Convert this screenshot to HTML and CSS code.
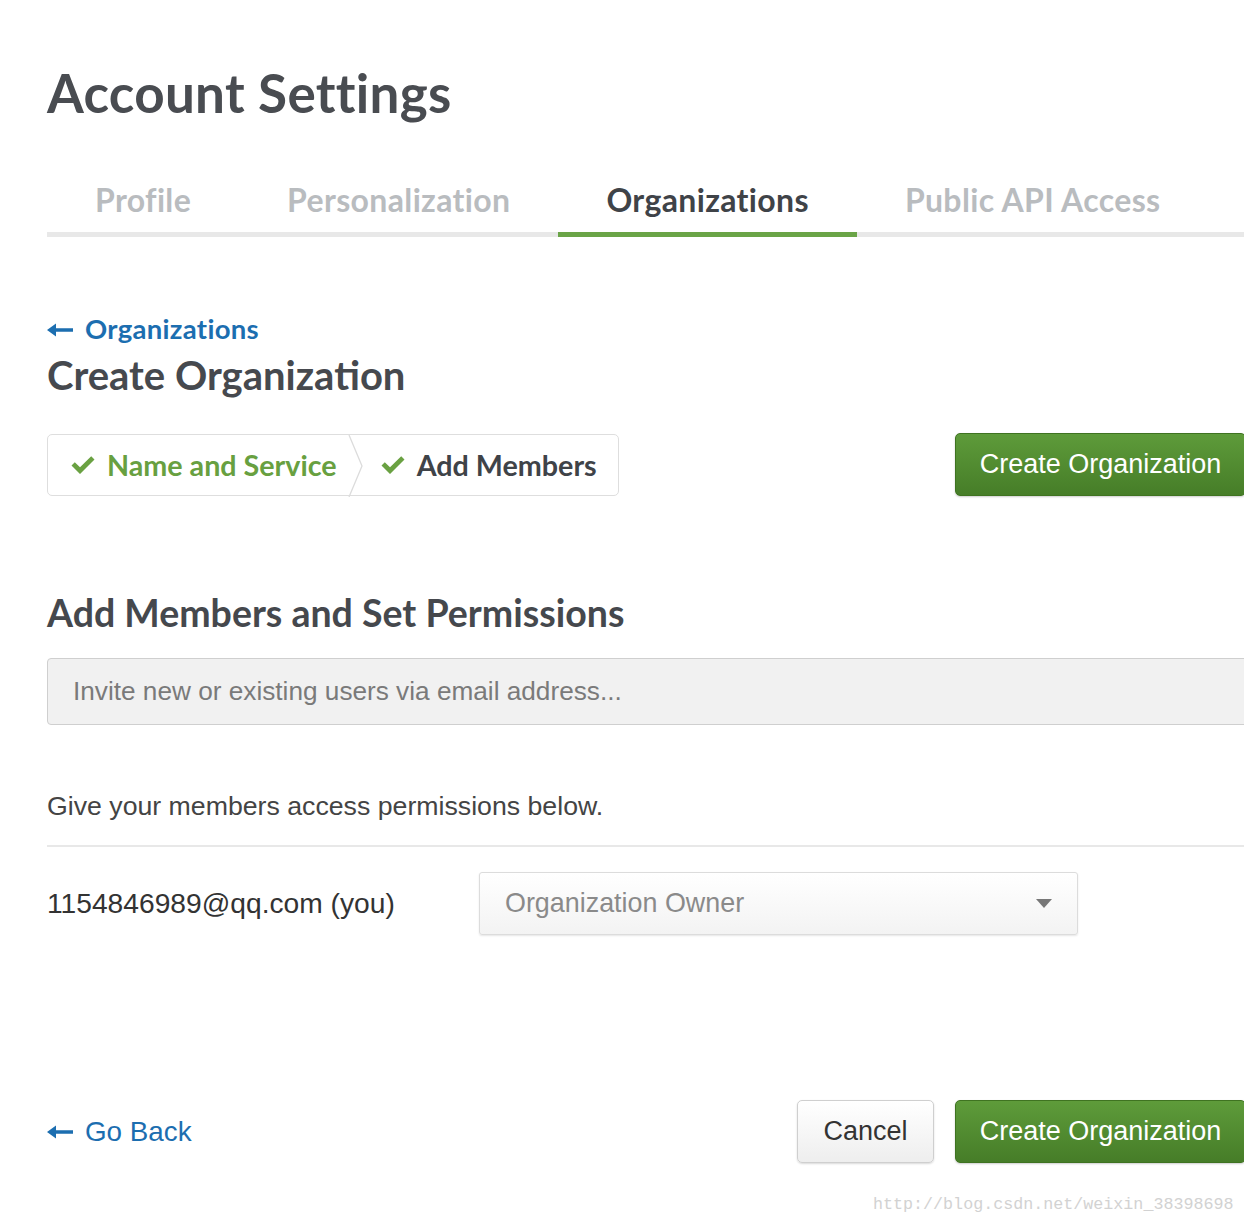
FILE: index.html
```html
<!DOCTYPE html>
<html>
<head>
<meta charset="utf-8">
<title>Account Settings</title>
<link rel="stylesheet" href="styles.css">
</head>
<body>
<div class="page">
  <h1 class="title">Account Settings</h1>
  <nav class="tabs">
    <a class="tab">Profile</a>
    <a class="tab">Personalization</a>
    <a class="tab active">Organizations</a>
    <a class="tab">Public API Access</a>
  </nav>

  <a class="back-link">
    <svg class="arrow" width="26" height="14" viewBox="0 0 26 14"><path d="M0 7 L9 0.5 L9 5.3 L26 5.3 L26 8.7 L9 8.7 L9 13.5 Z" fill="currentColor"/></svg>
    <span>Organizations</span>
  </a>
  <h2 class="subtitle">Create Organization</h2>

  <div class="steps-row">
    <div class="steps">
      <div class="step done">
        <svg class="check" width="24" height="19" viewBox="0 0 24 19"><path d="M0.5 10.5 L3.8 7.2 L9 12.3 L20.2 1.2 L23.5 4.5 L9 19 Z" fill="#6aa142"/></svg>
        <span>Name and Service</span>
      </div>
      <svg class="chevron" width="16" height="62" viewBox="0 0 16 62"><polyline points="1,0 14,31 1,62" fill="none" stroke="#dcdcdc" stroke-width="1.3"/></svg>
      <div class="step current">
        <svg class="check" width="24" height="19" viewBox="0 0 24 19"><path d="M0.5 10.5 L3.8 7.2 L9 12.3 L20.2 1.2 L23.5 4.5 L9 19 Z" fill="#6aa142"/></svg>
        <span>Add Members</span>
      </div>
    </div>
    <button class="btn btn-primary">Create Organization</button>
  </div>

  <h3 class="section-title">Add Members and Set Permissions</h3>
  <div class="invite">Invite new or existing users via email address...</div>

  <p class="hint">Give your members access permissions below.</p>
  <div class="member-row">
    <span class="member">1154846989@qq.com (you)</span>
    <div class="select">
      <span>Organization Owner</span>
      <svg width="16" height="9" viewBox="0 0 16 9"><path d="M0 0 L16 0 L8 9 Z" fill="#777"/></svg>
    </div>
  </div>

  <div class="footer">
    <a class="go-back">
      <svg class="arrow" width="26" height="14" viewBox="0 0 26 14"><path d="M0 7 L9 0.5 L9 5.3 L26 5.3 L26 8.7 L9 8.7 L9 13.5 Z" fill="currentColor"/></svg>
      <span>Go Back</span>
    </a>
    <div class="actions">
      <button class="btn btn-default">Cancel</button>
      <button class="btn btn-primary">Create Organization</button>
    </div>
  </div>
  <div class="watermark">http://blog.csdn.net/weixin_38398698</div>
</div>
</body>
</html>
```

FILE: styles.css
```css
html, body {
  margin: 0;
  padding: 0;
  overflow: hidden;
  background: #fff;
}
.page {
  width: 1199px;
  padding: 0 0 0 47px;
  font-family: "Lato", "Open Sans", sans-serif;
  color: #464a4f;
}
.title {
  margin: 0;
  padding-top: 61px;
  font-size: 53px;
  line-height: 64px;
  font-weight: 700;
  color: #494c51;
  letter-spacing: 0.3px;
}
.tabs {
  display: flex;
  margin-top: 51px;
  border-bottom: 5px solid #e8e8e8;
}
.tab {
  padding: 0 48px 8px;
  font-size: 32px;
  line-height: 48px;
  font-weight: 700;
  color: #b9bcbf;
  letter-spacing: 0.35px;
  margin-bottom: -5px;
  border-bottom: 5px solid transparent;
}
.tab.active {
  color: #3f4348;
  border-bottom-color: #6aa447;
}
.back-link {
  display: flex;
  align-items: center;
  gap: 12px;
  margin-top: 75px;
  color: #1c6eb0;
  font-size: 27.5px;
  font-weight: 700;
  line-height: 34px;
  letter-spacing: 0.3px;
}
.back-link .arrow { margin-top: 1px; }
.subtitle {
  margin: 6px 0 0;
  font-size: 40px;
  line-height: 46px;
  font-weight: 700;
  color: #46494e;
}
.steps-row {
  display: flex;
  justify-content: space-between;
  align-items: center;
  margin-top: 35px;
}
.steps {
  display: flex;
  align-items: stretch;
  height: 62px;
  border: 1px solid #dedede;
  border-radius: 5px;
  box-sizing: border-box;
}
.step {
  display: flex;
  align-items: center;
  gap: 12px;
  font-size: 28.7px;
  font-weight: 700;
}
.step.done {
  padding: 0 11px 0 23px;
  color: #68a040;
}
.step.current {
  padding: 0 21px 0 17px;
  color: #3f4348;
}
.chevron { display: block; }
.btn {
  font-family: "Liberation Sans", Arial, sans-serif;
  font-size: 27px;
  height: 63px;
  border-radius: 5px;
  cursor: pointer;
  box-sizing: border-box;
}
.btn-primary {
  width: 291px;
  color: #fff;
  border: 1px solid #3f7321;
  background: linear-gradient(#5e9b3a, #467d28);
  box-shadow: 0 1px 2px rgba(0,0,0,0.2);
}
.btn-default {
  width: 137px;
  color: #333;
  border: 1px solid #cfcfcf;
  background: linear-gradient(#ffffff, #eeeeee);
  box-shadow: 0 1px 2px rgba(0,0,0,0.15);
}
.section-title {
  margin: 96px 0 0;
  font-size: 37.5px;
  line-height: 42px;
  font-weight: 700;
  color: #45484d;
}
.invite {
  margin-top: 24px;
  height: 67px;
  box-sizing: border-box;
  border: 1px solid #cfcfcf;
  border-radius: 4px;
  background: #f1f1f1;
  padding: 0 25px;
  display: flex;
  align-items: center;
  font-family: "Liberation Sans", Arial, sans-serif;
  font-size: 26.2px;
  color: #7a7a7a;
  width: 1220px;
}
.hint {
  margin: 66px 0 0;
  font-family: "Liberation Sans", Arial, sans-serif;
  font-size: 26.7px;
  line-height: 30px;
  color: #444;
  padding-bottom: 24px;
  border-bottom: 2px solid #e8e8e8;
}
.member-row {
  display: flex;
  align-items: center;
  margin-top: 25px;
}
.member {
  width: 432px;
  font-family: "Liberation Sans", Arial, sans-serif;
  font-size: 28.2px;
  color: #333;
}
.select {
  width: 599px;
  height: 63px;
  box-sizing: border-box;
  border: 1px solid #dcdcdc;
  border-radius: 3px;
  background: linear-gradient(#ffffff, #f3f3f3);
  box-shadow: 0 1px 2px rgba(0,0,0,0.1);
  display: flex;
  align-items: center;
  justify-content: space-between;
  padding: 0 25px 0 25px;
  font-family: "Liberation Sans", Arial, sans-serif;
  font-size: 26.9px;
  color: #8a8a8a;
}
.footer {
  display: flex;
  justify-content: space-between;
  align-items: center;
  margin-top: 165px;
}
.go-back {
  display: flex;
  align-items: center;
  gap: 12px;
  color: #1c6eb0;
  font-family: "Liberation Sans", Arial, sans-serif;
  font-size: 27.8px;
}
.actions {
  display: flex;
  gap: 21px;
}
.watermark {
  margin: 32px 0 0 826px;
  font-family: "Liberation Mono", monospace;
  font-size: 16.7px;
  color: #d2d2d2;
}
```
